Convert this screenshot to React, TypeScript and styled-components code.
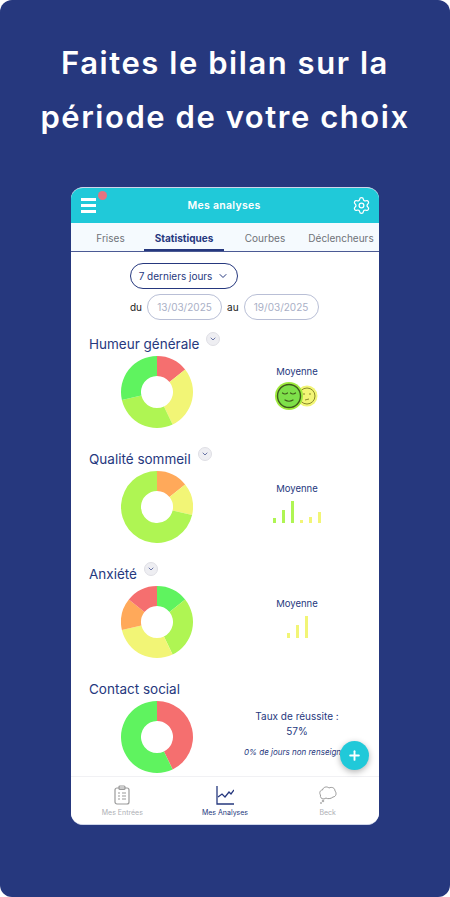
import styled, { createGlobalStyle } from "styled-components";
import { ChevronDown, Plus, Settings } from "lucide-react";

const GlobalStyle = createGlobalStyle`
	html, body {
		margin: 0;
		padding: 0;
		background: #ffffff;
	}
	* {
		box-sizing: border-box;
	}
`;

const Page = styled.div`
	width: 450px;
	height: 897px;
	background: #26387e;
	border-radius: 12px;
	overflow: hidden;
	display: flex;
	flex-direction: column;
	align-items: center;
	font-family: Inter, "Liberation Sans", sans-serif;
`;
const Headline = styled.h1`
	margin: 36px 0 0;
	height: 151px;
	color: #ffffff;
	font-size: 31px;
	font-weight: 600;
	line-height: 54px;
	letter-spacing: 1.55px;
	text-align: center;
`;
const Phone = styled.div`
	position: relative;
	width: 308px;
	height: 638px;
	background: #ffffff;
	border-radius: 12px;
	border: 1px solid #cfd6ea;
	border-width: 1px 0 1px 0;
	overflow: hidden;
	display: flex;
	flex-direction: column;
`;
const TopBar = styled.header`
	position: relative;
	height: 35px;
	flex: none;
	background: #20c9d9;
	display: flex;
	align-items: center;
	justify-content: space-between;
	padding: 0 8px 0 10px;
	color: #ffffff;
`;
const Burger = styled.div`
	width: 15px;
	display: flex;
	flex-direction: column;
	gap: 3px;
	span {
		height: 3px;
		background: #ffffff;
	}
`;
const Dot = styled.span`
	position: absolute;
	left: 27px;
	top: 3px;
	width: 9px;
	height: 9px;
	border-radius: 50%;
	background: #e5737f;
`;
const BarTitle = styled.span`
	font-size: 10.5px;
	font-weight: 600;
	letter-spacing: 0.3px;
`;
const Tabs = styled.nav`
	height: 29px;
	flex: none;
	background: #f5fafe;
	border-bottom: 1px solid #4b5a94;
	display: flex;
	overflow: hidden;
	padding-left: 17px;
	font-size: 10px;
`;
const Tab = styled.div<{ $active?: boolean }>`
	flex: none;
	height: 29px;
	width: ${(p) => p.$width}px;
	margin-right: ${(p) => p.$gap}px;
	display: flex;
	align-items: center;
	justify-content: center;
	font-weight: ${(p) => (p.$active ? 700 : 400)};
	color: ${(p) => (p.$active ? "#26387e" : "#6f7278")};
	border-bottom: ${(p) => (p.$active ? "3px solid #26387e" : "none")};
	padding-top: ${(p) => (p.$active ? "3px" : "0")};
`;
const Scroll = styled.main`
	flex: 1;
	min-height: 0;
	overflow: hidden;
`;
const Range = styled.div`
	margin: 11px 0 0 59px;
	width: 108px;
	height: 26px;
	border: 1px solid #26387e;
	border-radius: 13px;
	display: flex;
	align-items: center;
	justify-content: center;
	gap: 5px;
	color: #26387e;
	font-size: 10px;
`;
const DatesRow = styled.div`
	margin: 5px 0 0 59px;
	display: flex;
	align-items: center;
	font-size: 10px;
	color: #222;
`;
const DateField = styled.div`
	width: 75px;
	height: 26px;
	margin: 0 5px;
	border: 1px solid #b9bfd6;
	border-radius: 13px;
	display: flex;
	align-items: center;
	justify-content: center;
	color: #a9afc6;
	font-size: 10px;
`;
const Section = styled.section<{ $top: number }>`
	margin-top: ${(p) => p.$top}px;
	padding-left: 18px;
`;
const TitleRow = styled.div`
	display: flex;
	align-items: flex-start;
	height: 20px;
	gap: 7px;
`;
const SectionTitle = styled.h2`
	margin: 0;
	font-size: 13.5px;
	font-weight: 400;
	line-height: 20px;
	color: #26387e;
`;
const Toggle = styled.span`
	width: 14px;
	height: 14px;
	margin-top: -2px;
	border-radius: 50%;
	background: #eeeef2;
	border: 1px solid #dfdfe5;
	display: flex;
	align-items: center;
	justify-content: center;
	color: #26387e;
`;
const SectionBody = styled.div`
	display: flex;
	align-items: center;
	height: 72px;
	margin-top: 2px;
`;
const ChartSlot = styled.div`
	margin-left: 32px;
	width: 72px;
	height: 72px;
	flex: none;
`;
const Side = styled.div`
	margin-left: 44px;
	width: 120px;
	display: flex;
	flex-direction: column;
	align-items: center;
	color: #26387e;
	font-size: 9.5px;
	margin-top: -8px;
`;
const SideLabel = styled.span`
	line-height: 12px;
`;
const Bars = styled.div`
	display: flex;
	align-items: flex-end;
	gap: 6px;
	height: 24px;
	margin-top: 4px;
`;
const Bar = styled.span<{ $h: number; $color: string }>`
	width: 3px;
	height: ${(p) => p.$h}px;
	background: ${(p) => p.$color};
`;
const Rate = styled.div`
	font-size: 10px;
	line-height: 15px;
	text-align: center;
	color: #26387e;
`;
const Note = styled.div`
	margin-top: 8px;
	font-size: 8px;
	font-style: italic;
	white-space: nowrap;
`;
const Fab = styled.div`
	position: absolute;
	right: 10px;
	bottom: 54px;
	width: 29px;
	height: 29px;
	border-radius: 50%;
	background: #20c9d9;
	box-shadow: 0 2px 6px rgba(0, 0, 0, 0.3);
	color: #ffffff;
	display: flex;
	align-items: center;
	justify-content: center;
`;
const BottomNav = styled.nav`
	height: 48px;
	flex: none;
	background: #ffffff;
	border-top: 1px solid #f1f1f4;
	display: grid;
	grid-template-columns: repeat(3, 1fr);
	padding: 0 0 0 0;
`;
const NavItem = styled.div<{ $active?: boolean }>`
	display: flex;
	flex-direction: column;
	align-items: center;
	padding-top: 8px;
	gap: 3px;
	font-size: 7px;
	color: ${(p) => (p.$active ? "#26387e" : "#aeb0b5")};
	svg {
		display: block;
	}
`;

const COLORS = {
	red: "#f56f6f",
	orange: "#ffa95a",
	yellow: "#f2f576",
	lime: "#aff553",
	green: "#5ff35f",
};

function Donut({ parts }: { parts: [string, number][] }) {
	const total = parts.reduce((sum, [, n]) => sum + n, 0);
	const R = 36;
	const r = 16;
	let done = 0;
	return (
		<svg width="72" height="72" viewBox="-36 -36 72 72">
			{parts.map(([color, n], i) => {
				const a0 = (done / total) * Math.PI * 2;
				done += n;
				const a1 = (done / total) * Math.PI * 2;
				const large = a1 - a0 > Math.PI ? 1 : 0;
				const p = (rad: number, a: number) => `${(rad * Math.sin(a)).toFixed(2)} ${(-rad * Math.cos(a)).toFixed(2)}`;
				return (
					<path
						key={i}
						fill={color}
						d={`M${p(R, a0)}A${R} ${R} 0 ${large} 1 ${p(R, a1)}L${p(r, a1)}A${r} ${r} 0 ${large} 0 ${p(r, a0)}Z`}
					/>
				);
			})}
		</svg>
	);
}

function Faces() {
	return (
		<svg width="46" height="30" viewBox="0 0 46 30" style={{ marginTop: 3 }}>
			<circle cx="33" cy="15" r="10.5" fill="#f2f576" />
			<circle cx="33" cy="15" r="8" fill="none" stroke="#8a8a2a" strokeWidth="1" />
			<path d="M29 13h2M35 13h2M31 19l4-1" stroke="#8a8a2a" strokeWidth="1" fill="none" />
			<circle cx="15" cy="15" r="14" fill="#9eea3c" />
			<circle cx="15" cy="15" r="11.5" fill="#7ee04a" stroke="#3f5a1c" strokeWidth="1.4" />
			<path d="M8.5 12q2.5 2 5 0M16.5 12q2.5 2 5 0M11 19q4 2.5 8 0" stroke="#3f5a1c" strokeWidth="1.2" fill="none" strokeLinecap="round" />
		</svg>
	);
}

export default function App() {
	const { red, orange, yellow, lime, green } = COLORS;
	return (
		<Page>
			<GlobalStyle />
			<Headline>
				Faites le bilan sur la
				<br />
				période de votre choix
			</Headline>
			<Phone>
				<TopBar>
					<Burger>
						<span />
						<span />
						<span />
					</Burger>
					<Dot />
					<BarTitle>Mes analyses</BarTitle>
					<Settings size={19} strokeWidth={1.6} />
				</TopBar>
				<Tabs>
					<Tab $width={45} $gap={11}>Frises</Tab>
					<Tab $width={80} $gap={16} $active>Statistiques</Tab>
					<Tab $width={50} $gap={16}>Courbes</Tab>
					<Tab $width={70} $gap={0}>Déclencheurs</Tab>
				</Tabs>
				<Scroll>
					<Range>
						7 derniers jours
						<ChevronDown size={12} />
					</Range>
					<DatesRow>
						du
						<DateField>13/03/2025</DateField>
						au
						<DateField>19/03/2025</DateField>
					</DatesRow>
					<Section $top={14}>
						<TitleRow>
							<SectionTitle>Humeur générale</SectionTitle>
							<Toggle><ChevronDown size={8} /></Toggle>
						</TitleRow>
						<SectionBody>
							<ChartSlot>
								<Donut parts={[[red, 1], [yellow, 2], [lime, 2], [green, 2]]} />
							</ChartSlot>
							<Side>
								<SideLabel>Moyenne</SideLabel>
								<Faces />
							</Side>
						</SectionBody>
					</Section>
					<Section $top={21}>
						<TitleRow>
							<SectionTitle>Qualité sommeil</SectionTitle>
							<Toggle><ChevronDown size={8} /></Toggle>
						</TitleRow>
						<SectionBody>
							<ChartSlot>
								<Donut parts={[[orange, 1], [yellow, 1], [lime, 5]]} />
							</ChartSlot>
							<Side>
								<SideLabel>Moyenne</SideLabel>
								<Bars>
									<Bar $h={5} $color={lime} />
									<Bar $h={13} $color={lime} />
									<Bar $h={22} $color={lime} />
									<Bar $h={3} $color={yellow} />
									<Bar $h={6} $color={yellow} />
									<Bar $h={11} $color={yellow} />
								</Bars>
							</Side>
						</SectionBody>
					</Section>
					<Section $top={21}>
						<TitleRow>
							<SectionTitle>Anxiété</SectionTitle>
							<Toggle><ChevronDown size={8} /></Toggle>
						</TitleRow>
						<SectionBody>
							<ChartSlot>
								<Donut parts={[[green, 1], [lime, 2], [yellow, 2], [orange, 1], [red, 1]]} />
							</ChartSlot>
							<Side>
								<SideLabel>Moyenne</SideLabel>
								<Bars>
									<Bar $h={5} $color={yellow} />
									<Bar $h={13} $color={yellow} />
									<Bar $h={22} $color={yellow} />
								</Bars>
							</Side>
						</SectionBody>
					</Section>
					<Section $top={21}>
						<TitleRow>
							<SectionTitle>Contact social</SectionTitle>
						</TitleRow>
						<SectionBody>
							<ChartSlot>
								<Donut parts={[[red, 3], [green, 4]]} />
							</ChartSlot>
							<Side>
								<Rate>
									Taux de réussite :
									<br />
									57%
								</Rate>
								<Note>0% de jours non renseignés</Note>
							</Side>
						</SectionBody>
					</Section>
				</Scroll>
				<Fab><Plus size={15} strokeWidth={3} /></Fab>
				<BottomNav>
					<NavItem>
						<svg width="18" height="20" viewBox="0 0 18 20" fill="none" stroke="#9a9a9a" strokeWidth="1.2">
							<rect x="2" y="3" width="14" height="16" rx="2" />
							<rect x="6" y="1" width="6" height="3.5" rx="1" />
							<path d="M5 8h2M9 8h4M5 11h2M9 11h4M5 14h2M9 14h4" />
						</svg>
						Mes Entrées
					</NavItem>
					<NavItem $active>
						<svg width="18" height="20" viewBox="0 0 18 20" fill="none" stroke="#26387e" strokeWidth="1.3">
							<path d="M1 1v18h17" />
							<path d="M2 12l4-3 3 3 4-5 2 2 3-4" />
						</svg>
						Mes Analyses
					</NavItem>
					<NavItem>
						<svg width="18" height="20" viewBox="0 0 18 20" fill="none" stroke="#9a9a9a" strokeWidth="1">
							<path d="M5 14c-3 0-4-2-3.500-4C0 8 1 5 3.500 5 4 2 8 1 10 3c3-1.500 6 0 6 3 2 2 1 6-2 6-2 2-6 2-7 1z" />
							<circle cx="4" cy="16" r="0.8" />
							<circle cx="2" cy="18" r="0.5" />
						</svg>
						Beck
					</NavItem>
				</BottomNav>
			</Phone>
		</Page>
	);
}
